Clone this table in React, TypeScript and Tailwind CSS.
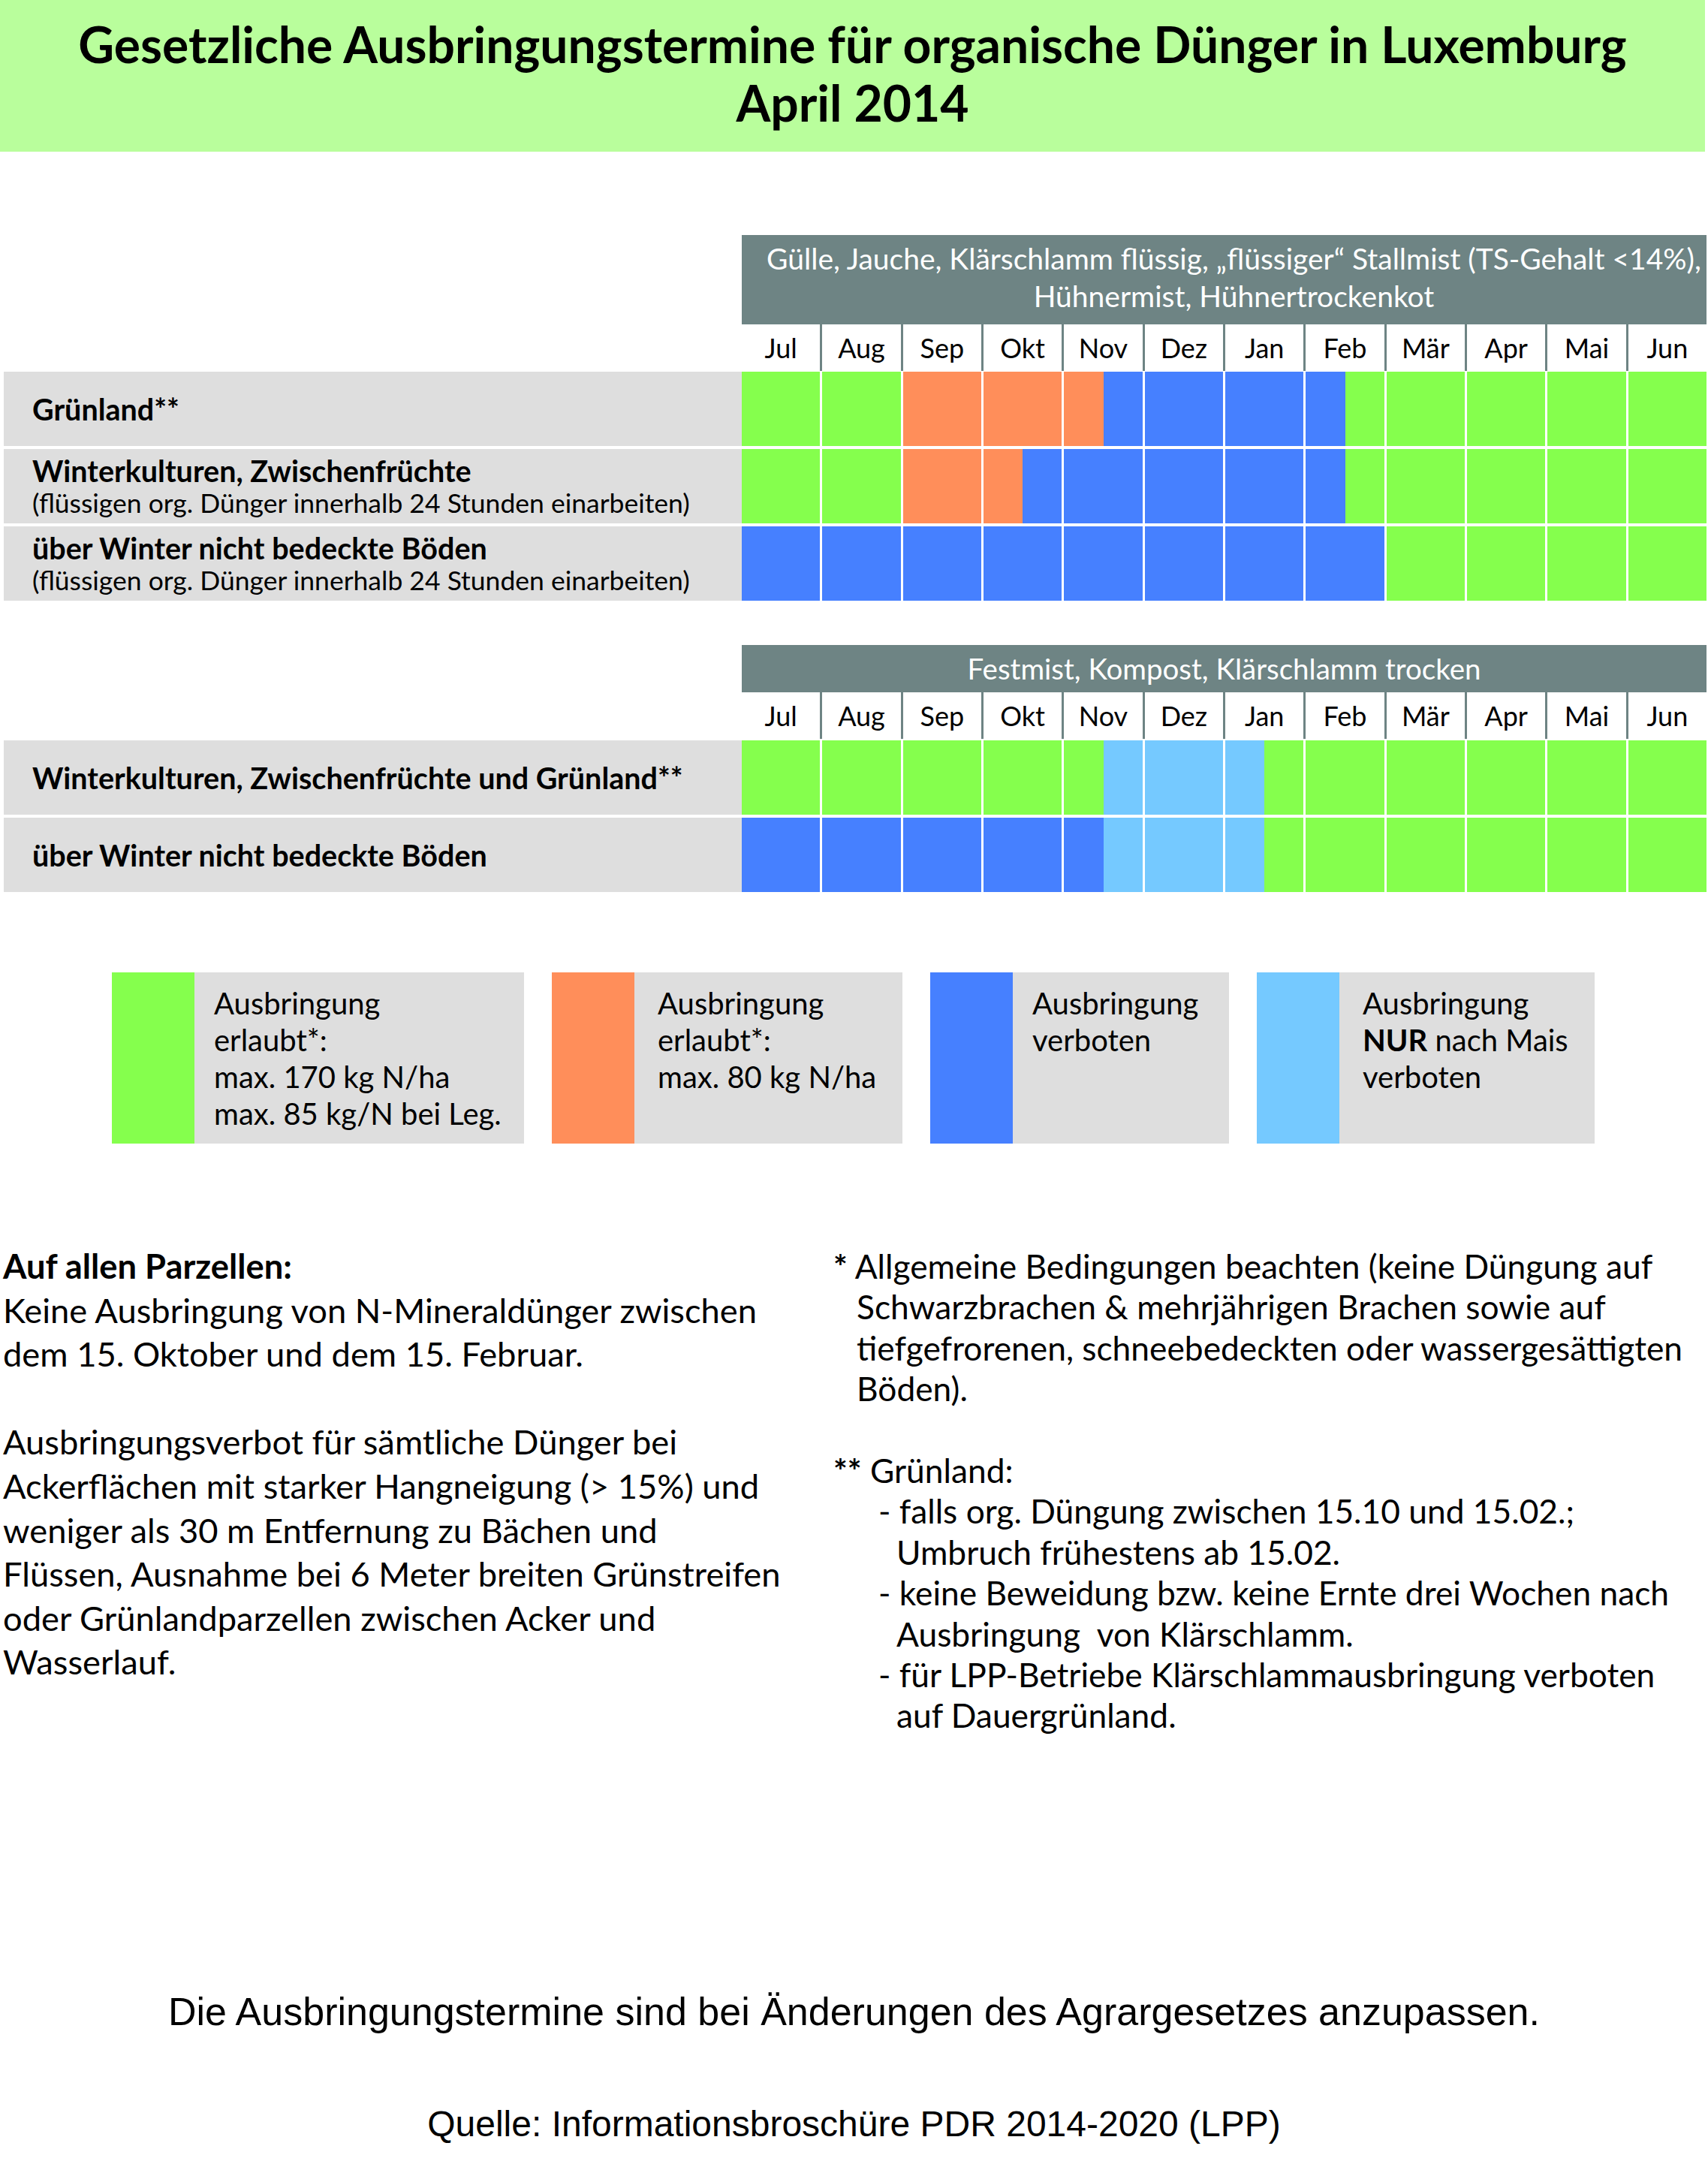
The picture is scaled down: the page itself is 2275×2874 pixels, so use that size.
import React from "react";

type Fill = "g" | "o" | "b" | "l";

const months = ["Jul", "Aug", "Sep", "Okt", "Nov", "Dez", "Jan", "Feb", "Mär", "Apr", "Mai", "Jun"];

const fillClass: Record<Fill, string> = {
  g: "bg-[#85ff4d]",
  o: "bg-[#ff8e5a]",
  b: "bg-[#4680ff]",
  l: "bg-[#75c9ff]",
};

// jeweils ein Buchstabe pro Halbmonat (Jul bis Jun)
const halves = (s: string): Fill[] => s.split("") as Fill[];

const liquidRows = [
  { title: "Grünland**", sub: "", fills: halves("ggggooooobbbbbbggggggggg") },
  {
    title: "Winterkulturen, Zwischenfrüchte",
    sub: "(flüssigen org. Dünger innerhalb 24 Stunden einarbeiten)",
    fills: halves("ggggooobbbbbbbbggggggggg"),
  },
  {
    title: "über Winter nicht bedeckte Böden",
    sub: "(flüssigen org. Dünger innerhalb 24 Stunden einarbeiten)",
    fills: halves("bbbbbbbbbbbbbbbbgggggggg"),
  },
];

const solidRows = [
  { title: "Winterkulturen, Zwischenfrüchte und Grünland**", sub: "", fills: halves("gggggggggllllggggggggggg") },
  { title: "über Winter nicht bedeckte Böden", sub: "", fills: halves("bbbbbbbbbllllggggggggggg") },
];

function MonthRow() {
  return (
    <div className="grid h-[62px] grid-cols-12 gap-x-[3px] bg-[#6e8484]">
      {months.map((m) => (
        <div key={m} className="flex items-center justify-center bg-white text-[36px] text-black">
          {m}
        </div>
      ))}
    </div>
  );
}

function DataRow({ title, sub, fills }: { title: string; sub: string; fills: Fill[] }) {
  return (
    <div className="mt-[4px] grid h-[99px] grid-cols-[983px_1285px]">
      <div className="flex flex-col justify-center whitespace-nowrap bg-[#dedede] pl-[38px] text-black">
        <span className="text-[39.5px] font-bold leading-[43px]">{title}</span>
        {sub && <span className="text-[35.5px] leading-[43px]">{sub}</span>}
      </div>
      <div className="grid grid-cols-12 gap-x-[3px] bg-white">
        {months.map((m, i) => (
          <div key={m} className="flex">
            <div className={`flex-1 ${fillClass[fills[i * 2]]}`} />
            <div className={`flex-1 ${fillClass[fills[i * 2 + 1]]}`} />
          </div>
        ))}
      </div>
    </div>
  );
}

function Legend({
  color,
  children,
  width,
  indent = "pl-[26px]",
}: {
  color: string;
  children: React.ReactNode;
  width: string;
  indent?: string;
}) {
  return (
    <div className={`flex h-[228px] bg-[#dedede] ${width}`}>
      <div className={`w-[110px] shrink-0 ${color}`} />
      <div className={`pt-[17px] text-[40px] leading-[49px] text-black ${indent}`}>{children}</div>
    </div>
  );
}

export default function App() {
  return (
    <div className="min-h-[2874px] w-[2275px] bg-white font-['Lato',sans-serif] text-black">
      {/* Titelband */}
      <div className="flex h-[202px] w-[2271px] flex-col items-center justify-center bg-[#b9fe9c] pb-[6px] text-[66px] font-bold leading-[78px]">
        <span>Gesetzliche Ausbringungstermine für organische Dünger in Luxemburg</span>
        <span>April 2014</span>
      </div>

      {/* Flüssige Dünger */}
      <div className="ml-[5px] mt-[111px]">
        <div className="ml-[983px] w-[1285px]">
          <div className="flex h-[119px] flex-col items-center justify-center whitespace-nowrap bg-[#6e8484] pb-[8px] pl-[26px] text-[39px] leading-[50px] text-white">
            <span>Gülle, Jauche, Klärschlamm flüssig, „flüssiger“ Stallmist (TS-Gehalt &lt;14%),</span>
            <span>Hühnermist, Hühnertrockenkot</span>
          </div>
          <MonthRow />
        </div>
        <div className="-mt-[3px]">
          {liquidRows.map((r) => (
            <DataRow key={r.title} {...r} />
          ))}
        </div>
      </div>

      {/* Feste Dünger */}
      <div className="ml-[5px] mt-[59px]">
        <div className="ml-[983px] w-[1285px]">
          <div className="flex h-[63px] items-center justify-center bg-[#6e8484] text-[38.5px] text-white">
            Festmist, Kompost, Klärschlamm trocken
          </div>
          <MonthRow />
        </div>
        <div className="-mt-[2px]">
          {solidRows.map((r) => (
            <DataRow key={r.title} {...r} />
          ))}
        </div>
      </div>

      {/* Legende */}
      <div className="ml-[149px] mt-[107px] flex gap-[37px]">
        <Legend color="bg-[#85ff4d]" width="w-[549px]">
          Ausbringung
          <br />
          erlaubt*:
          <br />
          max. 170 kg N/ha
          <br />
          max. 85 kg/N bei Leg.
        </Legend>
        <Legend color="bg-[#ff8e5a]" width="w-[467px]" indent="pl-[31px]">
          Ausbringung
          <br />
          erlaubt*:
          <br />
          max. 80 kg N/ha
        </Legend>
        <Legend color="bg-[#4680ff]" width="w-[398px]">
          Ausbringung
          <br />
          verboten
        </Legend>
        <Legend color="bg-[#75c9ff]" width="w-[450px]" indent="pl-[31px]">
          Ausbringung
          <br />
          <b>NUR</b> nach Mais
          <br />
          verboten
        </Legend>
      </div>

      {/* Hinweise */}
      <div className="mt-[134px] flex items-start">
        <div className="ml-[4px] w-[1106px] whitespace-nowrap text-[45.3px] leading-[58.6px]">
          <div className="font-bold">Auf allen Parzellen:</div>
          <div>Keine Ausbringung von N-Mineraldünger zwischen</div>
          <div>dem 15. Oktober und dem 15. Februar.</div>
          <div className="h-[58.6px]" />
          <div>Ausbringungsverbot für sämtliche Dünger bei</div>
          <div>Ackerflächen mit starker Hangneigung (&gt; 15%) und</div>
          <div>weniger als 30 m Entfernung zu Bächen und</div>
          <div>Flüssen, Ausnahme bei 6 Meter breiten Grünstreifen</div>
          <div>oder Grünlandparzellen zwischen Acker und</div>
          <div>Wasserlauf.</div>
        </div>
        <div className="pt-[2px] whitespace-nowrap text-[44.3px] leading-[54.4px]">
          <div>
            <span className="font-bold">*</span> Allgemeine Bedingungen beachten (keine Düngung auf
          </div>
          <div className="pl-[31px]">Schwarzbrachen &amp; mehrjährigen Brachen sowie auf</div>
          <div className="pl-[31px]">tiefgefrorenen, schneebedeckten oder wassergesättigten</div>
          <div className="pl-[31px]">Böden).</div>
          <div className="h-[54.4px]" />
          <div>
            <span className="font-bold">**</span> Grünland:
          </div>
          <div className="pl-[60px]">- falls org. Düngung zwischen 15.10 und 15.02.;</div>
          <div className="pl-[84px]">Umbruch frühestens ab 15.02.</div>
          <div className="pl-[60px]">- keine Beweidung bzw. keine Ernte drei Wochen nach</div>
          <div className="pl-[84px]">Ausbringung&nbsp; von Klärschlamm.</div>
          <div className="pl-[60px]">- für LPP-Betriebe Klärschlammausbringung verboten</div>
          <div className="pl-[84px]">auf Dauergrünland.</div>
        </div>
      </div>

      {/* Fußzeile */}
      <div className="mt-[337px] text-center font-['Liberation_Sans',sans-serif] text-[52px] leading-[60px]">
        Die Ausbringungstermine sind bei Änderungen des Agrargesetzes anzupassen.
      </div>
      <div className="mt-[92px] text-center font-['Liberation_Sans',sans-serif] text-[48px] leading-[56px]">
        Quelle: Informationsbroschüre PDR 2014-2020 (LPP)
      </div>
    </div>
  );
}
